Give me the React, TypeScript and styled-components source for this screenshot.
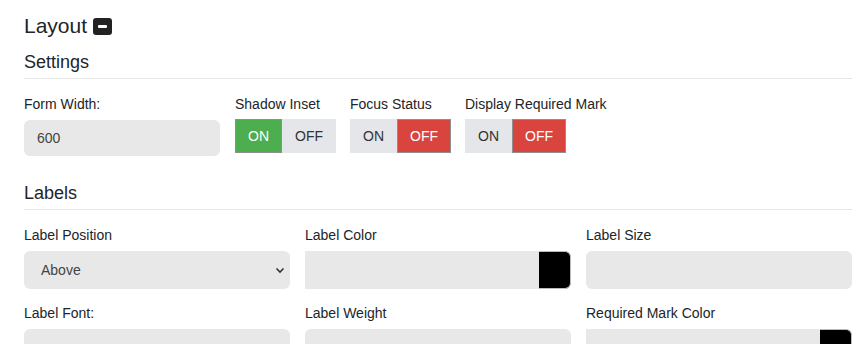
import React from 'react';
import styled, { createGlobalStyle } from 'styled-components';

const GlobalStyle = createGlobalStyle`
  html, body {
    margin: 0;
    padding: 0;
    background: #ffffff;
    font-family: 'Liberation Sans', Arial, sans-serif;
    color: #212529;
  }
`;

const Page = styled.div`
  padding: 14px 10px 0 24px;
  overflow: hidden;
  height: 344px;
  box-sizing: border-box;
`;

const Title = styled.h1`
  display: flex;
  align-items: center;
  gap: 6px;
  margin: 0;
  font-size: 21px;
  font-weight: 400;
  line-height: 24px;
`;

const CollapseIcon = styled.span`
  display: inline-flex;
  align-items: center;
  justify-content: center;
  width: 19px;
  height: 17px;
  border-radius: 3px;
  background: #222;
  margin-top: 1px;

  &::after {
    content: '';
    width: 9px;
    height: 3px;
    border-radius: 1px;
    background: #fff;
  }
`;

const SectionTitle = styled.h2<{ $top: number }>`
  margin: ${({ $top }) => $top}px 0 0;
  padding-bottom: 6px;
  border-bottom: 1px solid #e6e6e6;
  font-size: 18px;
  font-weight: 400;
  line-height: 20px;
`;

const SettingsRow = styled.div`
  display: flex;
  gap: 15px;
  margin-top: 17px;
`;

const Field = styled.div<{ $width?: number }>`
  display: flex;
  flex-direction: column;
  width: ${({ $width }) => ($width ? `${$width}px` : 'auto')};
  flex-shrink: 0;
`;

const Label = styled.label`
  font-size: 14px;
  line-height: 16px;
  margin-bottom: 8px;
  white-space: nowrap;
`;

const TextBox = styled.div<{ $height: number }>`
  box-sizing: border-box;
  height: ${({ $height }) => $height}px;
  background: #e8e8e8;
  border-radius: 6px;
  display: flex;
  align-items: center;
  padding: 0 13px;
  font-size: 14px;
  color: #444;
`;

const SelectBox = styled(TextBox)`
  justify-content: space-between;
  padding: 0 5px 0 17px;
`;

const ColorGroup = styled(TextBox)`
  padding: 0;
  justify-content: flex-end;
  border-radius: 0 6px 6px 0;
`;

const Swatch = styled.span<{ $color: string }>`
  width: 32px;
  height: 100%;
  box-sizing: border-box;
  background: ${({ $color }) => $color};
  border: 1px solid #bbb;
  border-left: none;
  border-radius: 0 6px 6px 0;
`;

const Toggle = styled.div`
  display: flex;
  height: 34px;
  margin-top: -1px;
`;

const ToggleButton = styled.span<{ $active: boolean; $tone: 'on' | 'off' }>`
  box-sizing: border-box;
  display: flex;
  align-items: center;
  padding: 0 12px;
  font-size: 14px;
  background: ${({ $active, $tone }) =>
    !$active ? '#e4e6e9' : $tone === 'on' ? '#4cae4f' : '#d9443f'};
  color: ${({ $active }) => ($active ? '#fff' : '#333')};
  border: 1px solid ${({ $active }) => ($active ? '#8f8f8f' : 'transparent')};
`;

const Grid = styled.div`
  display: grid;
  grid-template-columns: repeat(3, 266px);
  column-gap: 15px;
  row-gap: 16px;
  margin-top: 17px;
`;

const Chevron = () => (
  <svg width="10" height="7" viewBox="0 0 10 7">
    <path d="M1.5 1.5 L5 5 L8.5 1.5" fill="none" stroke="#333" strokeWidth="1.6" />
  </svg>
);

type ToggleProps = { label: string; value: boolean };

const OnOff = ({ label, value }: ToggleProps) => (
  <Field $width={100}>
    <Label>{label}</Label>
    <Toggle>
      <ToggleButton $active={value} $tone="on">ON</ToggleButton>
      <ToggleButton $active={!value} $tone="off">OFF</ToggleButton>
    </Toggle>
  </Field>
);

export default function App() {
  return (
    <>
      <GlobalStyle />
      <Page>
        <Title>
          Layout <CollapseIcon />
        </Title>

        <SectionTitle $top={14}>Settings</SectionTitle>
        <SettingsRow>
          <Field $width={196}>
            <Label>Form Width:</Label>
            <TextBox $height={36}>600</TextBox>
          </Field>
          <OnOff label="Shadow Inset" value={true} />
          <OnOff label="Focus Status" value={false} />
          <OnOff label="Display Required Mark" value={false} />
        </SettingsRow>

        <SectionTitle $top={27}>Labels</SectionTitle>
        <Grid>
          <Field>
            <Label>Label Position</Label>
            <SelectBox $height={38}>
              Above <Chevron />
            </SelectBox>
          </Field>
          <Field>
            <Label>Label Color</Label>
            <ColorGroup $height={38}>
              <Swatch $color="#000" />
            </ColorGroup>
          </Field>
          <Field>
            <Label>Label Size</Label>
            <TextBox $height={38} />
          </Field>
          <Field>
            <Label>Label Font:</Label>
            <TextBox $height={38} />
          </Field>
          <Field>
            <Label>Label Weight</Label>
            <TextBox $height={38} />
          </Field>
          <Field>
            <Label>Required Mark Color</Label>
            <ColorGroup $height={38}>
              <Swatch $color="#000" />
            </ColorGroup>
          </Field>
        </Grid>
      </Page>
    </>
  );
}
